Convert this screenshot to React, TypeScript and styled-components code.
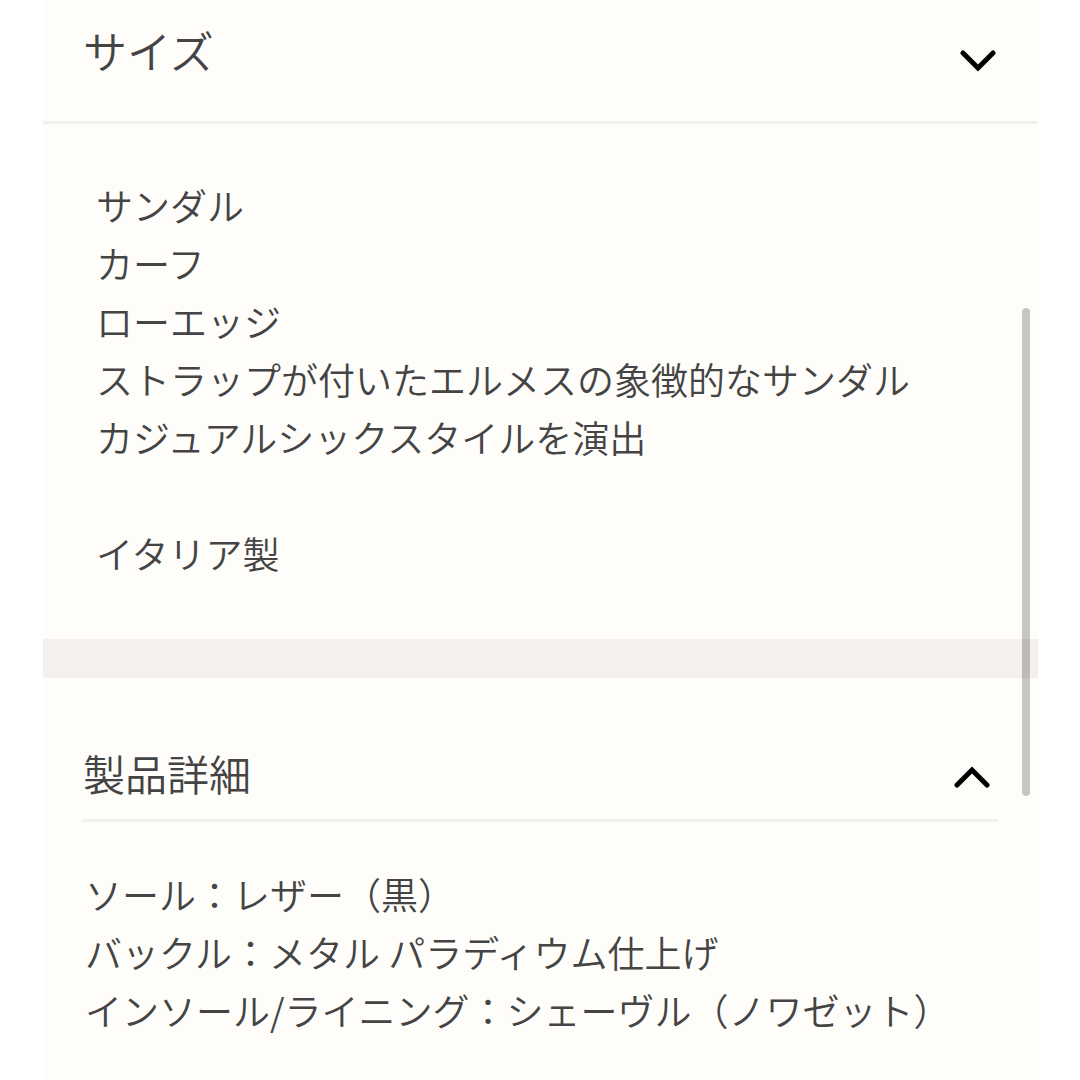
import React from "react";
import styled, { createGlobalStyle } from "styled-components";

const Global = createGlobalStyle`
  * { box-sizing: border-box; }
  body {
    margin: 0;
    background: #ffffff;
    color: #444444;
    font-family: "Noto Sans CJK JP", sans-serif;
    font-weight: 350;
  }
`;

const Page = styled.main`
  position: relative;
  margin: 0 42px 0 43px;
  min-height: 100vh;
  background: #fefdf9;
`;

const SizeToggle = styled.button`
  display: flex;
  align-items: flex-start;
  justify-content: space-between;
  width: 100%;
  padding: 20px 42px 41px 40px;
  border: 0;
  border-bottom: 3px solid #f2f0ed;
  background: none;
  color: inherit;
  font: inherit;
  font-size: 44px;
  line-height: 60px;
`;

const DetailToggle = styled(SizeToggle)`
  padding: 17px 8px 16px 0;
  font-size: 42px;
`;

const Icon = styled.svg<{ $top: number }>`
  flex: none;
  margin-top: ${(p) => p.$top}px;
`;

const Description = styled.section`
  padding: 52px 53px 57px;
`;

const Line = styled.p`
  margin: 0;
  min-height: 58px;
  font-size: 37px;
  line-height: 58px;
`;

const Divider = styled.hr`
  height: 39px;
  margin: 0;
  border: 0;
  background: #f3f0ed;
`;

const Details = styled.section`
  padding: 48px 40px 0;
`;

const Specs = styled.div`
  padding: 43px 0 0 2px;
`;

const Heading = styled.h2`
  margin: 0;
  font: inherit;
`;

const Scrollbar = styled.div`
  position: absolute;
  top: 308px;
  right: 8px;
  width: 8px;
  height: 488px;
  border-radius: 4px;
  background: rgba(0, 0, 0, 0.22);
`;

const Chevron = ({ up = false }: { up?: boolean }) => (
  <Icon
    $top={up ? 22 : 29}
    width="36"
    height="24"
    viewBox="0 0 36 24"
    fill="none"
    stroke="#000"
    strokeWidth="5"
    strokeLinecap="round"
    strokeLinejoin="miter"
    aria-hidden="true"
  >
    <path d={up ? "M3 20 18 5 33 20" : "M3 4 18 19 33 4"} />
  </Icon>
);

const description = [
  "サンダル",
  "カーフ",
  "ローエッジ",
  "ストラップが付いたエルメスの象徴的なサンダル",
  "カジュアルシックスタイルを演出",
  "",
  "イタリア製",
];

const specs = [
  "ソール：レザー（黒）",
  "バックル：メタル パラディウム仕上げ",
  "インソール/ライニング：シェーヴル（ノワゼット）",
];

export default function App() {
  return (
    <>
      <Global />
      <Page lang="ja">
        <Heading>
          <SizeToggle type="button" aria-expanded={false}>
            サイズ
            <Chevron />
          </SizeToggle>
        </Heading>
        <Description>
          {description.map((text, i) => (
            <Line key={i}>{text}</Line>
          ))}
        </Description>
        <Divider />
        <Details>
          <Heading>
            <DetailToggle type="button" aria-expanded>
              製品詳細
              <Chevron up />
            </DetailToggle>
          </Heading>
          <Specs>
            {specs.map((text) => (
              <Line key={text}>{text}</Line>
            ))}
          </Specs>
        </Details>
        <Scrollbar />
      </Page>
    </>
  );
}
